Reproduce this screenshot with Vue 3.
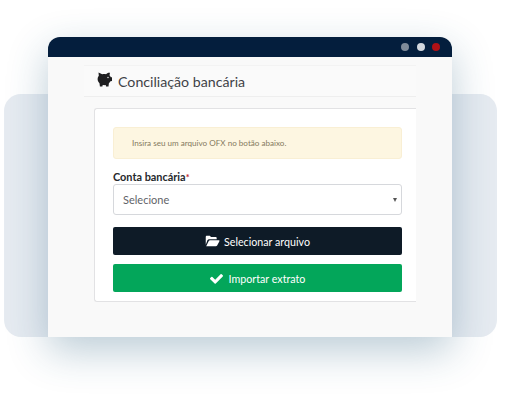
<script setup>
const dots = ['#7f8b99', '#d3d8df', '#b01116']
</script>

<template>
  <div class="stage">
    <div class="backdrop"></div>
    <div class="window">
      <div class="titlebar">
        <span v-for="c in dots" :key="c" class="dot" :style="{ background: c }"></span>
      </div>
      <div class="content">
        <div class="heading">
          <svg class="pig" viewBox="0 0 15 15" width="15" height="15">
            <path fill="#1d1d1f" d="M1.500.6 5.200 2.300C6.300 2 7.800 2 9 2.200 9.900 1 11.500.4 13 .8l-.5 2.400c.6.600 1 1.300 1.300 2H15v3.700l-1.500.4c-.4.800-1 1.500-1.600 2l-.4 3.200H9l-.3-1.500c-1 .2-2 .2-3 0l-.3 1.500H2.900l-.4-3.300C1.300 10 .6 8.600.6 7c0-1.200.4-2.300 1.200-3.200z"/>
            <circle cx="11" cy="5.500" r=".7" fill="#fafafa"/>
          </svg>
          <span class="title">Conciliação bancária</span>
        </div>
        <div class="card">
          <div class="alert">Insira seu um arquivo OFX no botão abaixo.</div>
          <div class="label">Conta bancária<span class="req">*</span></div>
          <div class="select">
            <span>Selecione</span>
            <span class="caret"></span>
          </div>
          <div class="btn dark">
            <svg viewBox="0 0 20 16" width="15" height="12">
              <path fill="#fff" d="M1 13V2.500C1 1.700 1.600 1 2.400 1h4l1.600 1.800h6.200c.8 0 1.400.6 1.400 1.400V5.500H5.500c-1 0-1.800.5-2.300 1.400z"/>
              <path fill="#fff" d="M1.600 15 5 8c.3-.7.900-1.100 1.700-1.100h11.700c.7 0 1.100.7.800 1.300l-3 5.700c-.4.700-1 1.100-1.800 1.100z"/>
            </svg>
            <span>Selecionar arquivo</span>
          </div>
          <div class="btn green">
            <svg viewBox="0 0 16 13" width="13" height="11">
              <path fill="#fff" d="M5.700 12.700.3 7.300a1 1 0 0 1 0-1.400l1.300-1.300a1 1 0 0 1 1.400 0L6.400 8 13 1.300a1 1 0 0 1 1.400 0l1.300 1.300a1 1 0 0 1 0 1.400L7.100 12.700a1 1 0 0 1-1.400 0z"/>
            </svg>
            <span>Importar extrato</span>
          </div>
        </div>
      </div>
    </div>
  </div>
</template>

<style scoped>
.stage {
  position: relative;
  width: 505px;
  height: 400px;
  overflow: hidden;
  background: #fff;
  padding: 37px 53px 0 48px;
  box-sizing: border-box;
  font-family: "Lato", "Noto Sans", sans-serif;
}
.backdrop {
  position: absolute;
  left: 4px;
  top: 94px;
  width: 493px;
  height: 243px;
  border-radius: 17px;
  background: #e6ebf1;
}
.window {
  position: relative;
  width: 404px;
  height: 300px;
  background: #f9f9f9;
  border-radius: 12px 12px 0 0;
  box-shadow: 0 14px 40px rgba(30, 85, 120, 0.3);
}
.titlebar {
  height: 20px;
  background: #041e3d;
  border-radius: 12px 12px 0 0;
  display: flex;
  align-items: center;
  justify-content: flex-end;
  gap: 7.500px;
  padding-right: 12px;
}
.dot {
  width: 8px;
  height: 8px;
  border-radius: 50%;
}
.content {
  padding: 8px 36px 0;
}
.heading {
  height: 32px;
  display: flex;
  align-items: center;
  gap: 6px;
  padding-left: 13px;
  background: #fafafa;
  border-top: 1px solid #f3f3f3;
  border-bottom: 1px solid #eeeeee;
  box-sizing: border-box;
}
.pig {
  margin-top: -4px;
}
.title {
  font-size: 14.200px;
  color: #3f4247;
}
.card {
  margin: 11px 0 0 10px;
  height: 194px;
  box-sizing: border-box;
  background: #fff;
  border: 1px solid #e2e2e4;
  border-right: 0;
  border-radius: 3px 0 0 3px;
  padding: 18px 14px 0 18px;
}
.alert {
  height: 32px;
  box-sizing: border-box;
  background: #fdf6e1;
  border: 1px solid #f9efd4;
  border-radius: 3px;
  padding-left: 18px;
  display: flex;
  align-items: center;
  font-size: 8.100px;
  color: #857a5e;
}
.label {
  margin-top: 10px;
  height: 15px;
  line-height: 15px;
  font-size: 10.900px;
  font-weight: 700;
  color: #26282c;
}
.req {
  color: #c0272d;
  font-size: 9px;
}
.select {
  height: 31px;
  box-sizing: border-box;
  border: 1px solid #d6d8dc;
  border-radius: 3px;
  padding: 0 4px 0 9px;
  display: flex;
  align-items: center;
  justify-content: space-between;
  font-size: 11px;
  color: #5f6368;
}
.caret {
  width: 0;
  height: 0;
  border-left: 2.500px solid transparent;
  border-right: 2.500px solid transparent;
  border-top: 4px solid #555;
}
.btn {
  height: 28px;
  border-radius: 2px;
  display: flex;
  align-items: center;
  justify-content: center;
  gap: 4px;
  color: #fff;
  font-size: 10.700px;
}
.dark {
  margin-top: 12px;
  background: #0e1b27;
}
.green {
  margin-top: 9px;
  background: #03a65a;
  gap: 6px;
}
</style>
